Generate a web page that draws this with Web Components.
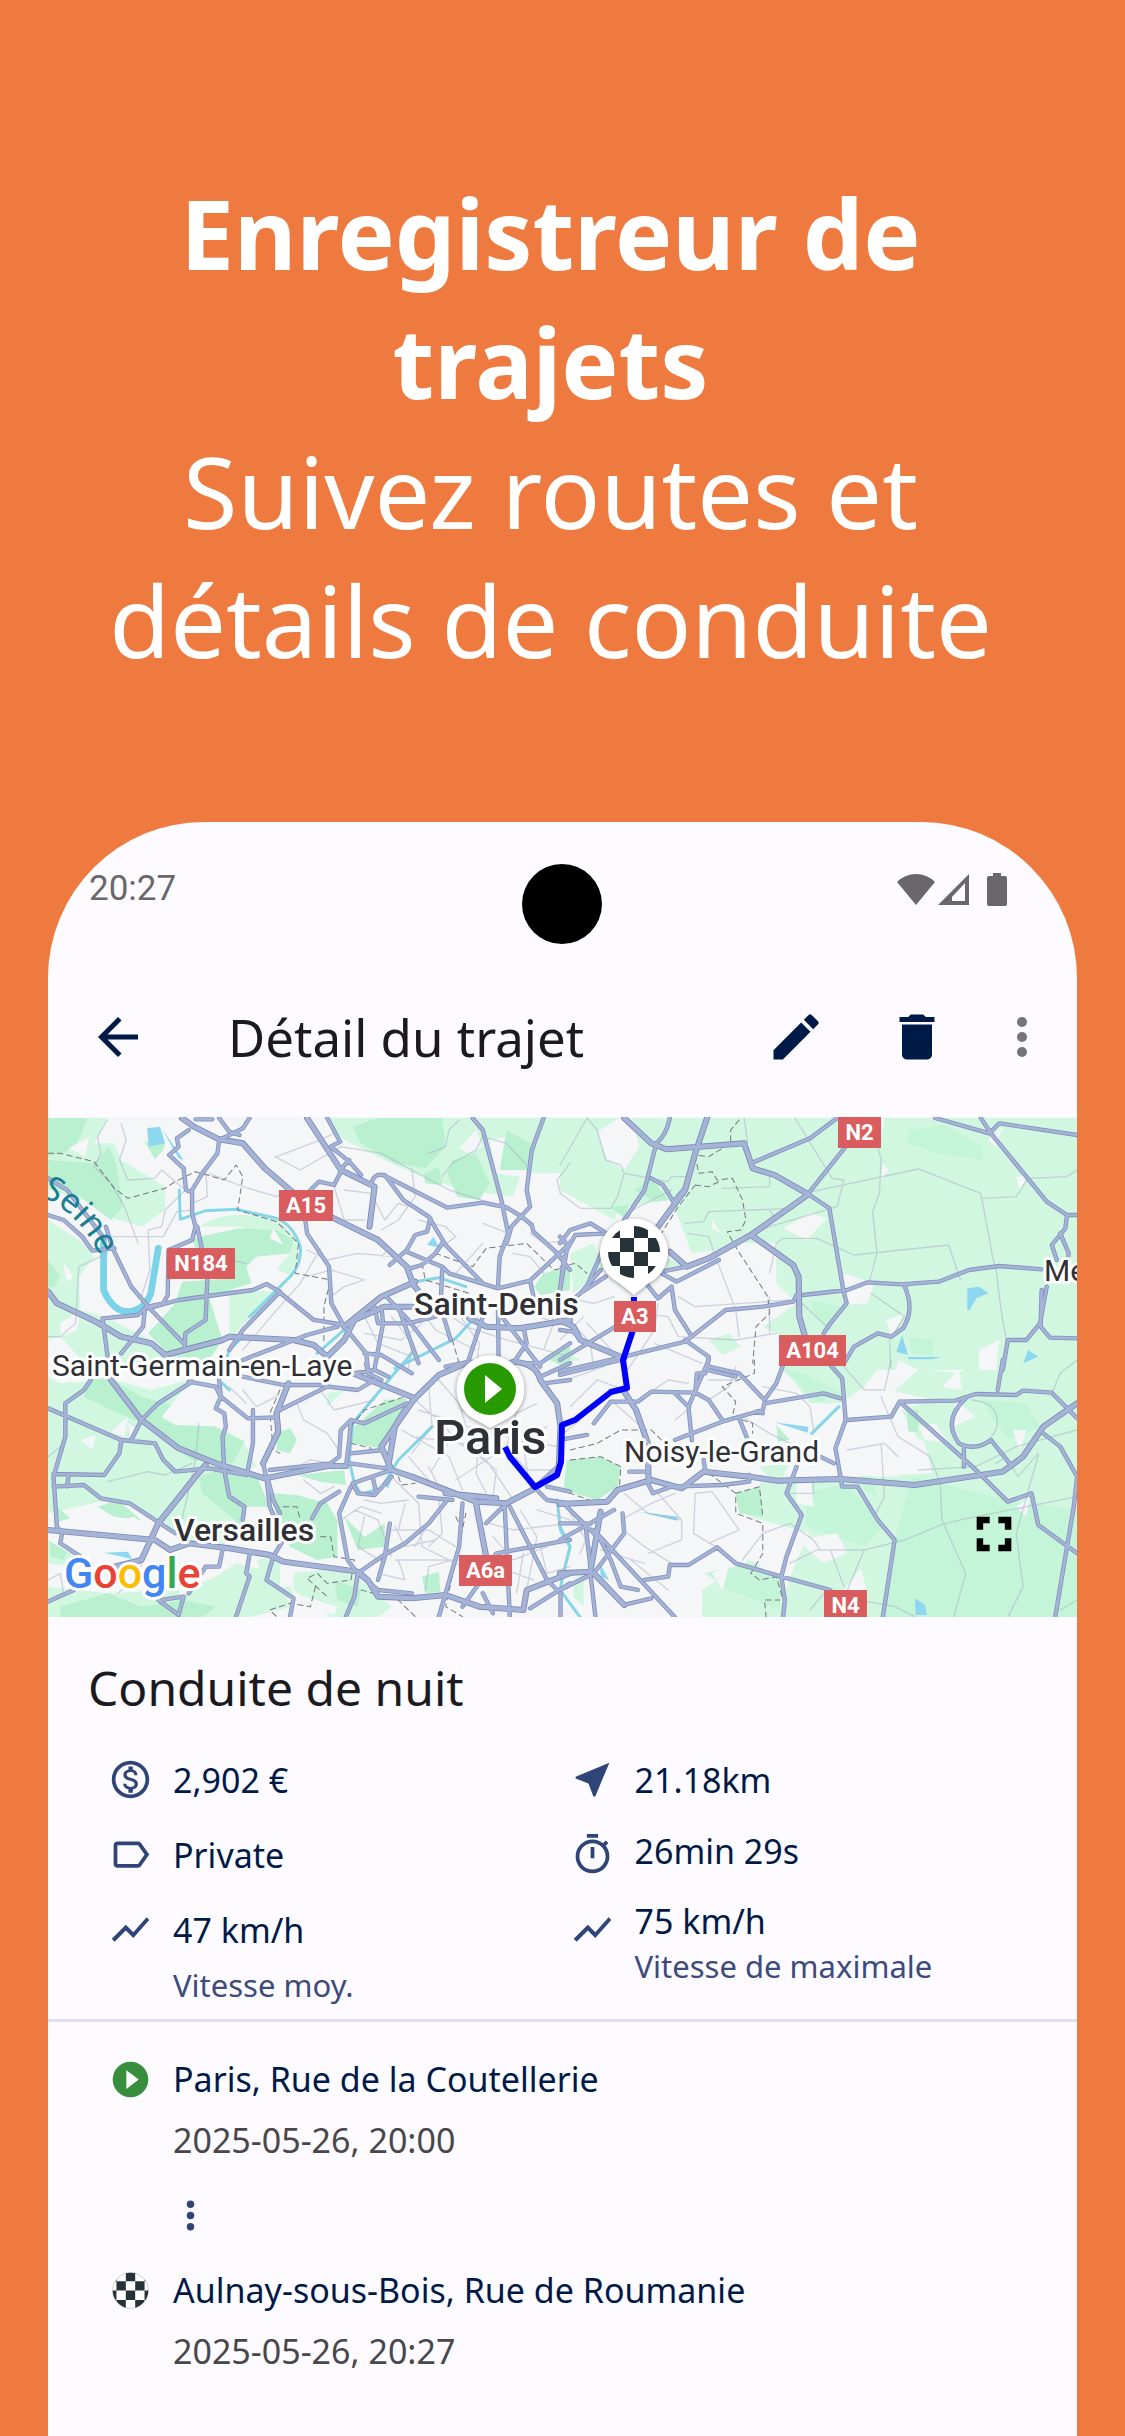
<!DOCTYPE html>
<html lang="fr">
<head>
<meta charset="utf-8">
<meta name="viewport" content="width=device-width, initial-scale=1">
<title>Détail du trajet</title>
<style>
  html, body { margin: 0; }
  body {
    display: flex;
    flex-direction: column;
    min-height: 100vh;
    background: #ee7a3f;
    font-family: "Noto Sans", "Open Sans", sans-serif;
  }
</style>
</head>
<body>
<promo-headline>
  Enregistreur de trajets
  <span slot="tagline">Suivez routes et détails de conduite</span>
</promo-headline>

<phone-frame>
  <status-bar slot="status" time="20:27"></status-bar>
  <app-bar>Détail du trajet</app-bar>
  <trip-map></trip-map>
  <trip-summary>
    <span slot="title">Conduite de nuit</span>
    <trip-stat slot="left" icon="money">2,902 €</trip-stat>
    <trip-stat slot="left" icon="label">Private</trip-stat>
    <trip-stat slot="left" icon="chart" note="Vitesse moy.">47 km/h</trip-stat>
    <trip-stat slot="right" icon="near">21.18km</trip-stat>
    <trip-stat slot="right" icon="timer" compact>26min 29s</trip-stat>
    <trip-stat slot="right" icon="chart" compact note="Vitesse de maximale">75 km/h</trip-stat>
  </trip-summary>
  <trip-stops>
    <trip-stop icon="start" time="2025-05-26, 20:00">Paris, Rue de la Coutellerie</trip-stop>
    <stop-gap></stop-gap>
    <trip-stop icon="finish" time="2025-05-26, 20:27">Aulnay-sous-Bois, Rue de Roumanie</trip-stop>
  </trip-stops>
</phone-frame>

<script>
const ICONS = {
  back: '<path d="M20 11H7.830l5.590-5.590L12 4l-8 8 8 8 1.410-1.410L7.830 13H20v-2z"/>',
  edit: '<path d="M3 17.250V21h3.750L17.810 9.940l-3.750-3.750L3 17.250zM20.710 7.040a1 1 0 0 0 0-1.410l-2.340-2.340a1 1 0 0 0-1.410 0l-1.830 1.830 3.750 3.750 1.830-1.830z"/>',
  trash: '<path d="M6 19c0 1.100.9 2 2 2h8c1.100 0 2-.9 2-2V7H6v12zM19 4h-3.500l-1-1h-5l-1 1H5v2h14V4z"/>',
  more: '<circle cx="12" cy="6" r="2"/><circle cx="12" cy="12" r="2"/><circle cx="12" cy="18" r="2"/>',
  money: '<path d="M12 2C6.480 2 2 6.480 2 12s4.480 10 10 10 10-4.480 10-10S17.520 2 12 2zm0 18c-4.410 0-8-3.590-8-8s3.590-8 8-8 8 3.590 8 8-3.590 8-8 8zm.31-8.860c-1.770-.45-2.340-.94-2.340-1.670 0-.84.79-1.430 2.100-1.430 1.380 0 1.900.66 1.940 1.640h1.710c-.05-1.340-.87-2.570-2.490-2.970V5H10.900v1.690c-1.510.32-2.720 1.300-2.720 2.810 0 1.790 1.490 2.690 3.660 3.210 1.950.46 2.340 1.150 2.340 1.870 0 .53-.39 1.390-2.100 1.390-1.600 0-2.230-.72-2.320-1.640H8.040c.1 1.700 1.360 2.660 2.860 2.970V19h2.340v-1.670c1.520-.29 2.720-1.160 2.730-2.770-.01-2.200-1.900-2.960-3.660-3.420z"/>',
  label: '<path d="M17.630 5.840C17.270 5.330 16.670 5 16 5H5c-1.100 0-2 .9-2 2v10c0 1.100.9 2 2 2h11c.67 0 1.270-.33 1.630-.84L22 12l-4.370-6.160zM16 17H5V7h11l3.550 5L16 17z"/>',
  chart: '<path d="M3.500 18.490l6-6.010 4 4L22 6.920l-1.410-1.410-7.090 7.970-4-4L2 16.990z"/>',
  near: '<path d="M21 3L3 10.530v.98l6.840 2.650L12.480 21h.98L21 3z"/>',
  timer: '<path d="M15 1H9v2h6V1zm-4 13h2V8h-2v6zm8.030-6.610l1.420-1.420c-.43-.51-.9-.99-1.410-1.410l-1.420 1.420C16.070 4.740 14.120 4 12 4c-4.970 0-9 4.030-9 9s4.020 9 9 9 9-4.030 9-9c0-2.120-.74-4.070-1.970-5.610zM12 20c-3.870 0-7-3.130-7-7s3.130-7 7-7 7 3.130 7 7-3.130 7-7 7z"/>',
  start: '<circle cx="12" cy="12" r="9.500" fill="#388e3c"/><path d="M9.800 7v10l6.600-5z" fill="#fff"/>',
  finish: '<circle cx="12" cy="12" r="9.500" fill="#fff" stroke="#ccc" stroke-width=".5"/><clipPath id="c"><circle cx="12" cy="12" r="9.500"/></clipPath><path clip-path="url(#c)" fill="#263238" d="M9.500 2h5v5h-5zM19.500 2h3v5h-3zM4.500 7h5v5h-5zM14.500 7h5v5h-5zM2 12h2.500v5H2zM9.500 12h5v5h-5zM19.500 12h3v5h-3zM4.500 17h5v5h-5zM14.500 17h5v5h-5zM2 2h2.500v5H2z"/>'
};

const icon = (name, size) =>
  `<svg viewBox="0 0 24 24" width="${size}" height="${size}" fill="currentColor" aria-hidden="true">${ICONS[name]}</svg>`;

class PromoHeadline extends HTMLElement {
  connectedCallback() {
    this.attachShadow({ mode: 'open' }).innerHTML = `
      <style>
        :host {
          display: block;
          box-sizing: border-box;
          min-height: 822px;
          padding: 168px 84px 0 60px;
          color: #fff;
          text-align: center;
        }
        h1 { margin: 0; font-size: 96px; line-height: 129px; font-weight: 700; }
        p { margin: 0; font-size: 99px; line-height: 129px; }
      </style>
      <h1><slot></slot></h1>
      <p><slot name="tagline"></slot></p>
    `;
  }
}

class PhoneFrame extends HTMLElement {
  connectedCallback() {
    this.attachShadow({ mode: 'open' }).innerHTML = `
      <style>
        :host {
          display: block;
          flex: 1;
          position: relative;
          margin: 0 48px;
          border-radius: 156px 156px 0 0;
          background: #fdfbff;
          overflow: hidden;
        }
        .camera {
          position: absolute;
          top: 42px;
          left: 50%;
          width: 80px;
          height: 80px;
          margin-left: -41px;
          border-radius: 50%;
          background: #000;
        }
      </style>
      <slot name="status"></slot>
      <div class="camera"></div>
      <slot></slot>
    `;
  }
}

class StatusBar extends HTMLElement {
  connectedCallback() {
    this.attachShadow({ mode: 'open' }).innerHTML = `
      <style>
        :host {
          display: flex;
          justify-content: space-between;
          align-items: center;
          padding: 45px 70px 46px 41px;
          color: #6a676b;
          font: 35px/44px Roboto, sans-serif;
        }
        .icons { display: flex; align-items: center; }
        .battery { margin-left: 18px; }
      </style>
      <span>${this.getAttribute('time')}</span>
      <div class="icons">
        <svg width="38" height="32" viewBox="0 0 38 32" fill="currentColor"><path d="M19 32L0 9Q8 1 19 1T38 9z"/></svg>
        <svg width="34" height="32" viewBox="0 0 34 32" fill="currentColor"><path fill-rule="evenodd" d="M3 32L34 1v31zM17 28h13V10L17 24z"/></svg>
        <svg class="battery" width="20" height="34" viewBox="0 0 20 34" fill="currentColor"><path d="M6 1h8v3h4q2 0 2 2v26q0 2-2 2H2q-2 0-2-2V6q0-2 2-2h4z"/></svg>
      </div>
    `;
  }
}

class AppBar extends HTMLElement {
  connectedCallback() {
    this.attachShadow({ mode: 'open' }).innerHTML = `
      <style>
        :host {
          display: flex;
          align-items: center;
          height: 160px;
          padding: 0 25px 0 40px;
          color: #001a48;
        }
        button {
          display: flex;
          justify-content: center;
          padding: 0;
          border: 0;
          background: none;
          color: inherit;
        }
        h2 {
          flex: 1;
          margin: 0 0 0 80px;
          color: #1b1b1f;
          font-size: 51px;
          line-height: 64px;
          font-weight: 400;
        }
        .action { width: 121px; }
        .more { margin-left: 15px; color: #757478; }
      </style>
      <button aria-label="Retour">${icon('back', 60)}</button>
      <h2><slot></slot></h2>
      <button class="action" aria-label="Modifier">${icon('edit', 60)}</button>
      <button class="action" aria-label="Supprimer">${icon('trash', 60)}</button>
      <button class="more" aria-label="Plus">${icon('more', 60)}</button>
    `;
  }
}

// The map is cut in four tiles, each drawn on its own grid at about 3x.
const TILES = [
  {
    at: 'translate(40 1110) scale(.338 .3333)',
    light: 'M24 24H200L160 100L220 100L240 150L370 230L370 300L300 350L200 320L130 270L24 240ZM24 330L130 400L160 440L115 500L120 600L190 620L330 690L400 780H150L60 680L24 690ZM470 350Q560 290 700 330Q770 380 765 440L740 495L700 480L740 430L600 350ZM840 24H1568V190L1440 190L1430 130L1380 80L1330 90L1350 190L1420 200L1400 260L1250 240L1130 200L1060 170L900 90ZM560 690L640 600L700 545L560 540Z',
    soft: '',
    mid: 'M24 24H140L110 100L70 130L24 140ZM24 150L160 160L205 110L225 160L245 290L210 330L120 260L24 225ZM310 95L370 95L365 120L340 148ZM450 385L590 355L700 360L750 390L740 430L640 440L610 470L625 520L500 560L540 690L500 750L390 745L320 670L400 580L420 515L575 505L575 415L460 415ZM925 50L1000 24H1190L1200 110L1140 175L1050 160L950 100ZM1220 150L1290 130L1330 220L1300 270L1235 260L1205 190ZM1135 190L1180 170L1190 225L1140 220ZM1380 60L1470 110L1440 180L1360 180ZM1490 490L1568 470V540L1480 555L1462 530ZM24 450L60 500L40 530H24ZM1490 740L1568 700V780Z',
    white: 'M145 80L135 140L85 115ZM70 460L100 500L78 515ZM60 640L120 600L110 660L60 680ZM1240 115L1290 60L1310 110L1270 130ZM680 385L690 355L720 405Z',
    water: 'M317 55L355 50L370 100L322 110ZM1145 405L1165 380L1180 412ZM360 55L425 150L410 145Z',
    rivers: 'M412 240L415 328L490 302L580 298L700 325Q750 345 770 410Q775 460 740 500L620 620M600 680L560 720L545 770M820 730L900 660L1010 560L1110 515L1180 503L1260 530M1050 775L1230 685L1280 630',
    wide: 'M188 385L188 540Q215 605 262 605Q310 600 328 550L350 415',
    minor: 'M200 30L170 80L180 130L160 170L210 220L250 290L290 400M240 40L255 90L235 150L260 210L340 205L360 180L430 240L370 300L360 350L320 360L325 480L300 560M205 380H365L405 305L450 300M24 680H60L105 640L115 470L200 430M700 140L830 90L870 70M695 140L770 180L890 110L1010 130L1100 180L1210 240L1370 290M490 170L495 260L450 280M500 190L600 230L700 260L730 240M870 230L900 330L960 330M900 240L980 250L1020 330L1060 280L1130 300M1000 380L1030 420L1010 440M790 420L850 450L940 430L1050 440M790 500L860 480L960 510L900 530L860 560M830 415L770 520L700 600L600 720M1150 130L1200 110L1210 60L1240 30M1190 200L1220 160L1290 120L1310 80L1380 100L1440 165M1100 175L1110 260L1060 330L1010 360M1120 330L1200 350L1230 380L1190 410M1400 430L1450 440L1490 490M1230 490L1310 400M1310 340L1385 370M1450 370L1490 400L1568 390M1568 160L1530 210L1540 250M1120 590L1170 660L1290 720M1150 570L1260 650L1380 690L1568 740M1040 620L1100 700L1090 775M1130 640L1070 690L960 670M1230 600L1300 700L1290 775M1180 560L1240 570L1310 640M1500 560L1520 640L1490 720M1400 560L1440 610L1568 650M960 620L1000 700L1100 740M560 450L610 460',
    roads: 'M24 205L80 240L190 385M850 24L888 95L860 110L915 155L950 195M888 180L915 150M980 225Q985 190 1015 195L1205 293L1310 278L1380 292L1425 320L1455 345L1460 365L1525 425L1568 480M1020 195L1075 270L1150 320L1200 405L1310 520M1155 325L1145 365L1110 375L1085 420L1035 465M1085 425L1130 445L1190 470L1210 490L1355 535L1450 512L1568 400M1190 400L1170 430L1130 465L1095 475M1280 24L1310 60L1365 270L1385 370L1360 440L1355 530M1490 24L1455 120L1440 240L1450 290L1395 350L1380 400M440 60L405 85L410 110L382 135L425 175L432 240L445 245M510 28H460M530 24L560 65L590 75M620 24L600 55L530 90L525 130L480 190L450 240L450 310L460 350L450 390L380 420L378 555L365 580L320 590M465 350L480 420L495 510L490 630L430 670L428 720M24 315L70 330L125 380L155 422L220 415M195 350L215 415L270 530L320 590L425 700M185 625L290 615L315 590M185 625L200 740M310 600L305 650L240 730M320 595L410 570L630 540L670 522L700 540L810 630L900 645M710 545L600 660L560 720M785 330L790 370L855 470L862 580L900 650L965 730L970 775M800 240L825 215L870 225L890 185M600 750L690 715L790 675L880 650M1010 590L1015 640L990 775M1065 605L1120 760M1025 560L1090 630L1180 750M990 590L1000 640L1090 640L1170 620M1190 480L1185 590L1215 690M1355 600L1357 760M1310 620L1265 760M1370 625L1480 770M1430 650L1440 700L1400 760M1450 512L1460 560L1568 620M1200 770L1270 755L1480 760L1568 700M1550 440L1540 530M960 730L1010 735L1100 790',
    major: 'M420 24L455 50L530 88L600 100L665 175L740 240L800 290L870 325L1000 390L1085 470L1105 525L1125 550M790 24L890 180L990 230L975 350M24 545L50 580L165 635L240 680L330 700L370 735L540 690L560 680L750 690L810 705L850 740L900 690L930 630L1020 590L1100 590M900 650L1010 560L1110 515M1270 625L1320 650L1420 655L1568 630',
    dashed: 'M24 130L60 130L160 155L220 235L260 265L370 235L400 215L460 185L545 210L580 165L600 200L585 300L700 335L765 400L755 490L860 510L840 590L840 700M1170 430L1280 470L1320 415L1440 400L1520 480L1568 470M1130 460L1140 510L1270 550M1220 690L1240 760'
  },
  {
    at: 'translate(560 1110) scale(.338 .3333)',
    light: 'M0 24H1530V780H960L860 770L760 700L660 680L600 650L700 580L640 520L640 400L520 410L390 430L330 270L180 290L160 330L0 240ZM30 430L100 400L130 480L40 550ZM440 690L500 670L535 710L480 735ZM0 710L60 750L0 760ZM310 440L370 465L320 480Z',
    soft: 'M1030 60L1140 45L1250 110L1250 150L1110 130L1030 100ZM740 570L840 590L800 660L760 620ZM1030 680L1110 690L1100 740L1040 730Z',
    mid: 'M220 240L270 205L320 270L280 275ZM150 290L205 285L190 325Z',
    white: 'M110 65L175 24H210L235 110L190 180L140 150ZM660 355L740 310L790 325L730 390ZM840 490L930 520L910 580L840 585ZM1265 90L1310 50L1290 110ZM1350 200L1385 195L1360 240ZM965 630L1020 610L980 680ZM450 330L480 375L450 355ZM1240 720L1300 690L1290 780H1240ZM950 24H960L952 80ZM955 160L972 180L950 210ZM540 400L640 400L620 500L560 560L500 450Z',
    water: 'M1205 535L1240 530L1268 550L1232 565L1212 600L1205 600ZM995 725L1012 675L1030 735ZM1370 760L1385 720L1415 740ZM1030 741H1130L1100 748H1030Z',
    rivers: '',
    wide: '',
    minor: 'M80 24L110 60L135 150L180 165L190 190L170 260L150 295L60 295L0 250M0 165L80 24M190 190L320 215L330 200L370 200M480 235L620 230L620 190M695 24L805 205L840 210L820 290L620 350L580 370M940 110L950 150L945 250L925 305L938 430L915 515M745 245L1060 177L1245 250L1280 440L1290 480L1305 600L1320 690M1245 265L1350 260L1385 205L1500 200L1530 180M620 490L640 400L660 385L760 385L870 435L1150 405L1185 510M370 340L425 335L440 305L690 295M920 550L1020 620L975 690L978 770M460 440L520 600L530 680M350 560L400 590L680 570M620 560V670M620 300L640 330M215 300L330 240M545 24L555 100M380 370L440 380L460 440M240 610L320 620L350 680L520 690L640 670M280 700L420 760M80 640L170 740M0 560L100 580L160 560M715 580L790 650M20 620L90 700L100 780M290 580L280 660L200 780M0 690L70 620',
    roads: 'M325 24Q315 75 285 100L250 240L190 330M820 24L740 85L565 160M845 110L735 250M735 253L797 295L838 540L848 580L800 640L780 670M300 490L345 515L470 450M300 485L375 470M60 550L135 500M255 520L290 565L330 530M330 530L340 600L390 680M720 555L850 540L910 517L1010 523L1120 515L1210 480L1300 468L1425 478M130 365L90 340L30 360L0 400M140 370L45 375L20 420L0 540M0 380L25 410M135 400L75 540M120 480L60 550L0 600M270 205L305 225L335 275L365 240M700 555L690 575L600 590L490 600L370 695L190 740L0 785M0 660L40 665L60 690M0 750L180 640M370 690L440 740L435 780L520 800M1110 24L1270 70L1300 40L1530 75M1245 24L1275 70L1440 275L1500 315H1530M1500 315L1495 355L1455 405L1470 450M1480 370L1505 430L1500 460M1020 530Q1050 600 1015 655L980 680L940 670L870 710L840 760M1440 530L1420 640L1380 690L1325 690L1310 780M1425 540L1422 650L1450 683L1530 685M1000 523H1030',
    major: 'M190 24L270 100L315 118L545 100L570 175L635 195L735 253M435 24L400 130L370 240L290 350M735 253L565 375L440 445L375 470L325 425M565 375L690 465L706 500L708 620L725 680M0 630L40 650L60 690L190 745',
    dashed: 'M530 30L505 60L505 100L440 140L400 135L410 190L450 185L465 210L510 205L540 270L550 330L535 360L495 365L525 420L615 560L620 610L580 650L570 760M400 225L440 230L470 215M400 225L350 290L300 370M0 470L45 460L80 490'
  },
  {
    at: 'translate(40 1360) scale(.338 .3333)',
    light: 'M24 50L60 70L220 60L330 90L440 60L400 150L480 180L600 240L640 320L560 340L480 400L560 430L600 470L540 560L440 560L380 500L280 440L200 420L24 460ZM24 680L200 700L420 690L520 650L580 610L700 640L740 740L620 772H24ZM750 640L900 620L1040 740L1000 772H860L750 690ZM24 540L90 580L110 620L24 610ZM640 600L700 590L750 700L700 740ZM850 100L900 90L850 140Z',
    soft: '',
    mid: 'M150 60L200 50L300 110L410 140L360 180L500 190L605 245L570 310L450 300L390 260L300 190L210 150L130 110ZM470 350L560 320L640 345L680 440L610 440L600 500L480 400ZM760 345L900 330L905 375L830 365ZM690 400L760 405L850 430L880 480L880 590L820 600L740 560L700 490ZM900 470L960 530L1020 490L1020 560L940 570ZM930 200L1020 120L1085 115L1060 200L1010 265L920 250ZM700 220L740 205L760 240L740 280L700 270ZM1130 650L1180 635L1185 695L1140 700ZM60 740L200 700L300 740L420 720L520 740L480 772H60ZM170 440L230 420L300 480L220 470ZM45 435L90 475L40 490ZM30 545L80 575L70 600L30 590ZM870 660L950 690L940 740L880 720Z',
    white: 'M440 70L520 60L540 200L400 195L360 170ZM120 240L165 225L155 270ZM260 190L290 210L270 240ZM210 215L260 170L250 230ZM200 485L280 470L330 540H200ZM750 700L880 740L870 765L750 730ZM710 600L745 620V680H710ZM420 640L460 620L450 690L410 720Z',
    water: 'M190 578L260 575L272 597ZM1010 370L1040 360L1030 385Z',
    rivers: 'M1100 -20L1040 50L925 190L915 300L930 370L950 402L1010 385L1060 300L1160 200M540 70L560 90M1530 420L1540 510L1568 560',
    wide: '',
    minor: 'M24 290L60 260M200 365L320 335L370 345L450 310M470 190L460 300L420 480M230 700L290 650L300 610M60 640L70 700M24 660L60 640M760 130L780 180L850 220L890 280M830 90L870 150L990 120M600 90L640 140L700 110M560 80L610 130M740 330L800 300L860 310M780 360L830 400L870 380M1110 120L1190 190L1240 250L1320 300L1400 420M1150 80L1160 200L1100 280M1120 150L1330 220L1530 260M1180 60L1240 130L1270 230M1100 230L1250 250L1350 330L1340 410M1070 210L1210 290L1250 390M1150 320L1180 380M1090 290L1150 360M1250 30L1250 150L1330 200M1400 30L1420 130L1380 230M1470 130L1410 160L1380 260L1440 330L1530 330M1420 200L1450 380M1300 230L1290 340L1320 400M1220 230L1160 330M1500 200L1350 280L1230 360M1040 350L1120 430L1130 560L1250 620M960 420L1010 430L1090 420M930 450L1000 480L1040 590M1040 510H1150L1230 560M890 480L950 440L1010 460M1050 600H1240L1330 610M1060 600L1080 660L1000 640M1160 470L1110 560M1180 420L1190 520L1150 560M1080 430L1060 510M1330 490L1400 510L1568 490M1340 530L1400 600L1500 560M1420 450L1470 530L1440 690M1350 620L1460 660M1430 580L1410 700M1470 450L1568 480M1480 560L1500 640L1568 620M1050 500L1080 560L1170 540M1140 690L1150 620L1220 600M960 470L940 560L1020 610',
    roads: 'M150 60L130 90L75 130L75 230L40 350L50 500L65 520L60 550L120 590M24 145L240 240L340 250L365 300L400 335L500 325L610 345M450 65L350 130L300 180L270 240M240 245L235 280L190 345L40 342M40 380L130 375L180 415L265 430L400 520M85 345L80 380M530 60L535 110L520 145L545 160L550 200L540 230L545 330L560 410L605 440L600 480M535 110L615 175L700 172M630 150L630 250L615 330M440 65L520 80L535 110M735 70L700 160M660 310L670 355L680 440L720 540L690 590L670 660L750 715L740 770M675 360L690 420L710 460M710 150L850 80L940 90L990 60M600 50L720 75L850 75M905 320L915 240L920 180L960 190L1085 130M885 290L890 210L920 180M680 330L860 310L885 290M920 280L1015 270M915 310L1025 325M920 380L885 460L910 600L940 640M940 640L930 710L905 770M805 475L830 430L885 395M925 370L1040 330M925 370L940 400L990 405L1040 350M985 355L995 400M1205 420L1150 490L1080 550L1010 590L940 640M1035 490L1020 590L1000 660M1120 410L1220 420M1250 430L1240 560L1180 770M1370 440L1320 490M1375 440L1390 770M1390 440L1500 660L1540 700L1540 770M1568 540L1350 580L1320 640L1250 740M1450 745L1568 670M1310 700L1340 760M1465 385L1500 420L1568 430M1568 395L1500 380M540 570L530 620L490 620L440 700M620 585L610 640L620 650L580 770M24 725L100 690M350 720L410 765L425 710L360 720M940 640L1000 690L1100 700M965 10L970 40L1010 60M925 40L990 30L1030 50M1480 50L1568 10M1490 70L1568 60',
    major: 'M210 60L300 180L410 265L520 310L665 355L850 318L905 318M490 315L460 350L350 490L300 600L220 620M24 510L340 540L385 570L440 550L560 565L680 585L720 605L940 635L970 660L1000 710L1100 715L1200 705L1300 740L1430 750L1440 690L1568 640M735 70L700 160L705 215L660 310M925 40L1110 115M1400 5Q1470 10 1480 60L1530 130L1540 200L1535 320L1465 385L1380 430L1290 425L1100 350L1040 330L1010 260L1050 200L1105 120L1180 45L1260 10M1290 430L1320 590M1200 400L1350 415M1030 320L1050 200L1080 150',
    dashed: 'M710 90L680 160L690 270L710 280M720 440L760 440L770 480M830 530L860 530L870 590L930 600L920 660L850 670L820 640L790 655L850 710M815 680L800 740L740 730L680 750L700 770M950 690L1060 720L1110 770M920 200L960 150L1080 110M920 250L980 265M1230 470L1240 490L1260 460L1200 740L1250 770M1060 350L1070 375L1110 370'
  },
  {
    at: 'translate(560 1360) scale(.338 .3333)',
    light: 'M650 0H960L900 80L830 130L740 130L690 60ZM1000 20L1180 40L1240 0H1530V772H640L700 600L740 520L560 470L600 350L1000 350L1060 240L1010 150L1100 120L980 90ZM520 400L590 380L690 440L640 470L530 460ZM420 690L560 600L660 660L650 772H420ZM40 660L70 640V740L40 710ZM590 320L680 310L640 380Z',
    soft: 'M730 400L850 370L960 500L900 560L730 500ZM1040 350L1330 420L1530 450V772H950L990 540ZM430 640L560 610L660 660L650 750L500 690ZM860 280L900 290L940 410L900 390ZM1250 120L1380 130L1420 200L1330 240L1270 160ZM650 20L720 40L840 100L760 130Z',
    mid: 'M20 300L120 290L180 320L170 380L110 420L10 390ZM520 400L590 380L600 470L530 460ZM640 195L680 240L645 245ZM1025 150L1060 150V215H1030Z',
    white: 'M850 200L1000 190L1080 250L1100 340L850 350ZM700 540L820 520L850 580L780 610ZM890 625L910 700H800L840 690ZM1170 120L1230 170L1160 200ZM1060 200L1110 190L1150 250L1080 240ZM1180 30L1190 90L1130 80ZM1340 210L1380 210L1360 270ZM450 640L500 620L480 690ZM1390 410L1380 470L1350 440ZM700 350L740 350L750 440L700 430ZM1000 0L1060 30L980 100Z',
    water: 'M635 187L735 200L733 218ZM235 455L350 470L345 482ZM118 610L145 660L120 650ZM1050 715L1080 735L1085 765H1052ZM270 355L325 365L323 377L275 369Z',
    rivers: 'M0 500L30 560L10 640L0 690L60 772M745 220L825 140',
    wide: '',
    minor: 'M1095 290L1125 370L1130 480L1200 640L1165 772M680 610L760 570L900 570L1020 540L1140 490L1230 470L1530 410M1415 285L1350 520L1370 680L1325 772M900 570L850 690M800 570L840 680M1220 120Q1310 130 1290 210L1270 240M1060 330L1230 320L1350 260L1530 210M850 270L960 250L1000 290M950 110L1000 230L1095 290M950 250L960 410L930 470M840 20L900 90L960 90L980 0M1530 0L1480 40L1455 100M1290 310L1320 290L1355 350L1415 280M440 60L530 60M440 120L500 80L520 20M270 95L320 60L380 70M150 120L240 200M30 140L110 60L190 90M20 60L130 20M600 80L700 100L740 140L750 210M540 170L620 220L700 260M10 220L60 180M340 180L390 140M400 400L395 520L460 560M290 400L360 480V540L260 580M400 400L450 395L530 510L440 550M190 400L260 460L360 480M340 400L270 430L180 480M200 520L250 560L330 610M540 600L600 520L680 490M680 490L750 540L770 570M670 400L750 400L750 360M740 750L780 700L990 740L1050 770M1480 750L1530 720M60 580L100 480M30 460L100 580M120 570L250 610M210 600L320 690',
    roads: 'M800 15L835 55L845 180L815 265L835 380L880 380L940 480L990 540L955 772M430 335L425 300M700 320L670 400L715 465L670 590L655 650L665 720L660 772M0 45L180 0M440 0L380 140L390 240M440 20L530 40L605 120M605 120L640 70L660 15M400 98L405 40L430 40M100 190L150 125L230 125L270 95L400 98L440 120L480 180M340 100L380 140M340 240L480 185L600 150L605 130L780 100L830 115M530 175L560 250M0 240L80 225M1005 125L1170 122L1230 102L1350 105L1370 92L1455 98L1530 175M1005 125L980 170L850 180M1005 125L1220 320L1325 425L1395 400L1415 495L1530 580M1295 90L1310 0M1430 220L1480 260L1530 350L1520 440L1465 772M1200 115Q1130 180 1180 250Q1230 275 1275 240L1330 310M1195 260V320M800 690L655 650L520 610L465 562L380 615H325L320 650L250 660M20 440L120 540L150 600L180 680L230 690M0 540L160 450M185 460L190 520L100 640M100 510L340 772M90 640L105 772M0 690L100 640L190 735L270 715M75 490L90 620M0 490L80 490M205 335H255M260 370L275 400L330 380L480 375L560 365V345M580 155L600 160M770 290L810 310',
    major: 'M0 432L140 425L170 390L270 360L360 385L425 335L560 350L640 362L830 357L1050 375L1310 335L1370 290L1430 200L1530 130M190 95L225 150L260 250L262 365M0 640L90 635L120 455M100 640L190 735',
    dashed: 'M575 0V40L480 80L520 125L510 170L570 190V220M300 240L270 210H180L110 250L30 270M0 390L60 410L110 430M30 300L120 290L180 320L175 390M440 340L520 400L520 460L600 490V580L565 640L590 660L640 650L660 720M520 400L590 380L600 470M610 772L605 720H650'
  }
];

const MAP_LAYERS = [
  ['light', 'fill="#d1f7e1"'],
  ['soft', 'fill="#c5f5d9"'],
  ['mid', 'fill="#b9f0d0"'],
  ['white', 'fill="#f5f6f8"'],
  ['water', 'fill="#8dd8f0"'],
  ['rivers', 'fill="none" stroke="#86d6e8" stroke-width="9"'],
  ['wide', 'fill="none" stroke="#7ad3e8" stroke-width="20"'],
  ['minor', 'fill="none" stroke="#aab0c6" stroke-opacity=".5" stroke-width="4"'],
  ['dashed', 'fill="none" stroke="#77777c" stroke-width="3" stroke-dasharray="16 12"'],
  ['roads', 'fill="none" stroke="#8493bd" stroke-width="13"'],
  ['major', 'fill="none" stroke="#7b8ab5" stroke-width="18"'],
  ['roads', 'fill="none" stroke="#a5b3d6" stroke-width="8"'],
  ['major', 'fill="none" stroke="#a5b3d6" stroke-width="13"']
];

const BADGES = [
  ['A15', 279, 1190, 54], ['N184', 167, 1248, 68], ['N2', 838, 1117, 43], ['A3', 614, 1301, 42],
  ['A104', 779, 1335, 67], ['A6a', 459, 1555, 53], ['N4', 824, 1590, 43]
];

class TripMap extends HTMLElement {
  connectedCallback() {
    const layers = MAP_LAYERS.map(([key, paint]) => `
      <g ${paint} stroke-linejoin="round" stroke-linecap="round">
        ${TILES.map(tile => `<path transform="${tile.at}" d="${tile[key]}"/>`).join('')}
      </g>
    `).join('');

    const badges = BADGES.map(([name, x, y, w]) => `
      <rect x="${x}" y="${y}" width="${w}" height="31" fill="#d95c5f"/>
      <text x="${x + w / 2}" y="${y + 23}">${name}</text>
    `).join('');

    this.attachShadow({ mode: 'open' }).innerHTML = `
      <style>
        :host { display: block; position: relative; overflow: hidden; }
        svg { display: block; width: 100%; }
        .labels text {
          fill: #2f3136;
          stroke: #fff;
          stroke-width: 6px;
          stroke-linejoin: round;
          paint-order: stroke;
          font-family: Roboto, sans-serif;
        }
        .town { font-size: 30px; }
        .big { font-size: 32px; font-weight: 500; }
        .city { font-size: 49px; font-weight: 500; }
        .labels .river { font: 34px "Noto Sans", sans-serif; fill: #1b7f94; stroke: none; }
        .badges text {
          fill: #fff;
          text-anchor: middle;
          font: 700 22px Roboto, sans-serif;
        }
        .labels .google { font-size: 43px; font-weight: 500; }
        button {
          position: absolute;
          right: 57px;
          bottom: 57px;
          padding: 0;
          border: 0;
          background: none;
        }
        button svg { width: 52px; height: 52px; }
      </style>
      <svg class="map" viewBox="48 1117 1029 500" role="img" aria-label="Carte du trajet">
        <rect x="48" y="1117" width="1029" height="500" fill="#f5f6f8"/>
        ${layers}
        <g class="labels">
          <path id="seine" d="M40 1196Q78 1212 100 1256" fill="none"/>
          <text class="river"><textPath href="#seine">Seine</textPath></text>
          <text class="big" x="414" y="1315">Saint-Denis</text>
          <text class="town" x="52" y="1376">Saint-Germain-en-Laye</text>
          <text class="city" x="434" y="1454">Paris</text>
          <text class="town" x="624" y="1462">Noisy-le-Grand</text>
          <text class="big" x="174" y="1541">Versailles</text>
          <text class="town" x="1044" y="1281">Me</text>
          <text class="google" x="64" y="1588"><tspan fill="#4285f4">G</tspan><tspan fill="#ea4335">o</tspan><tspan fill="#fbbc05">o</tspan><tspan fill="#4285f4">g</tspan><tspan fill="#34a853">l</tspan><tspan fill="#ea4335">e</tspan></text>
        </g>
        <path d="M634 1297L633 1330L623 1360L627 1388L611 1392L575 1420L562 1425L561 1462L557 1475L535 1487L510 1457L505 1447" fill="none" stroke="#0000fa" stroke-width="6" stroke-linejoin="round"/>
        <g class="badges">${badges}</g>
        <g style="filter: drop-shadow(0 1px 2px #0006)">
          <path d="M490 1428L476 1420A34 34 0 1 1 505 1420Z" fill="#fff"/>
          <path d="M634 1295L619 1283A34 34 0 1 1 649 1283Z" fill="#fff"/>
        </g>
        <circle cx="490" cy="1389" r="26" fill="#279a00"/>
        <path d="M485 1375V1403L502 1389Z" fill="#fff"/>
        <clipPath id="flag"><circle cx="634" cy="1252" r="26"/></clipPath>
        <path clip-path="url(#flag)" fill="#263238" d="M606 1225h14v13h-14zM634 1225h14v13h-14zM620 1238h14v14h-14zM648 1238h14v14h-14zM606 1252h14v14h-14zM634 1252h14v14h-14zM620 1266h14v14h-14zM648 1266h14v14h-14z"/>
      </svg>
      <button aria-label="Plein écran">
        <svg viewBox="0 0 24 24"><path d="M7 14H4v6h6v-3H7zM4 10h3V7h3V4H4zM17 17h-3v3h6v-6h-3zM14 4v3h3v3h3V4z"/></svg>
      </button>
    `;
  }
}

class TripSummary extends HTMLElement {
  connectedCallback() {
    this.attachShadow({ mode: 'open' }).innerHTML = `
      <style>
        :host {
          display: block;
          padding: 39px 46px 16px 40px;
          border-bottom: 3px solid #e0dff0;
        }
        h3 {
          margin: 0 0 22px;
          color: #1b1b1f;
          font-size: 48px;
          line-height: 64px;
          font-weight: 400;
        }
        .columns {
          display: grid;
          grid-template-columns: 1fr 1fr;
          padding-left: 20px;
        }
      </style>
      <h3><slot name="title"></slot></h3>
      <div class="columns">
        <div><slot name="left"></slot></div>
        <div><slot name="right"></slot></div>
      </div>
    `;
  }
}

class TripStat extends HTMLElement {
  connectedCallback() {
    const note = this.getAttribute('note');
    this.attachShadow({ mode: 'open' }).innerHTML = `
      <style>
        :host {
          display: grid;
          grid-template-columns: 45px 1fr;
          grid-template-rows: 75px;
          column-gap: 20px;
          align-items: center;
          color: #2f4577;
        }
        svg { display: block; }
        .value { color: #001a48; font-size: 34px; line-height: 44px; }
        .note { grid-column: 2; color: #3d4b7c; font-size: 31px; line-height: 36px; }
        :host([compact]) .value { padding-bottom: 8px; }
        :host([compact][note]) .value { padding-bottom: 18px; }
        :host([compact]) .note { margin-top: -19px; }
      </style>
      ${icon(this.getAttribute('icon'), 45)}
      <span class="value"><slot></slot></span>
      ${note ? `<span class="note">${note}</span>` : ''}
    `;
  }
}

class TripStops extends HTMLElement {
  connectedCallback() {
    this.attachShadow({ mode: 'open' }).innerHTML = `
      <style>
        :host { display: block; padding: 27px 42px 40px 60px; }
      </style>
      <slot></slot>
    `;
  }
}

class TripStop extends HTMLElement {
  connectedCallback() {
    this.attachShadow({ mode: 'open' }).innerHTML = `
      <style>
        :host {
          display: grid;
          grid-template-columns: 45px 1fr;
          column-gap: 20px;
          align-items: center;
          font-size: 34px;
          line-height: 61px;
        }
        svg { display: block; }
        .place { color: #001a48; }
        time { grid-column: 2; color: #49474c; }
      </style>
      ${icon(this.getAttribute('icon'), 45)}
      <span class="place"><slot></slot></span>
      <time>${this.getAttribute('time')}</time>
    `;
  }
}

class StopGap extends HTMLElement {
  connectedCallback() {
    this.attachShadow({ mode: 'open' }).innerHTML = `
      <style>
        :host {
          display: flex;
          align-items: center;
          height: 89px;
          padding-left: 60px;
          color: #2f4577;
        }
      </style>
      ${icon('more', 45)}
    `;
  }
}

customElements.define('promo-headline', PromoHeadline);
customElements.define('phone-frame', PhoneFrame);
customElements.define('status-bar', StatusBar);
customElements.define('app-bar', AppBar);
customElements.define('trip-map', TripMap);
customElements.define('trip-summary', TripSummary);
customElements.define('trip-stat', TripStat);
customElements.define('trip-stops', TripStops);
customElements.define('trip-stop', TripStop);
customElements.define('stop-gap', StopGap);
</script>
</body>
</html>
